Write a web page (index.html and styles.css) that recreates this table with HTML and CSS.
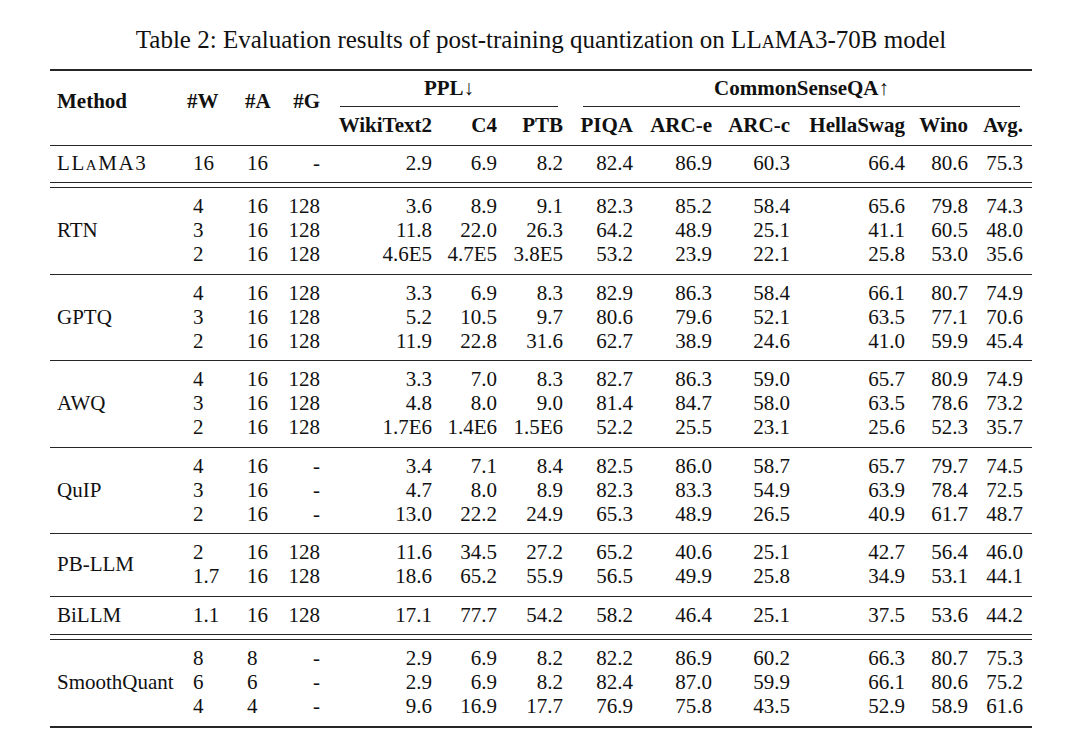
FILE: index.html
```html
<!DOCTYPE html>
<html>
<head>
<meta charset="utf-8">
<link rel="stylesheet" href="styles.css">
</head>
<body>
<div class="page">
  <div class="caption">Table 2: Evaluation results of post-training quantization on LL<span class="sc">a</span>MA3-70B model</div>
  <div class="tbl">
    <div class="g hd">
      <div class="h hm">Method</div>
      <div class="h hl hw">#W</div>
      <div class="h hl ha">#A</div>
      <div class="h hr hg">#G</div>
      <div class="h grp-ppl">PPL<span class="arr">↓</span></div>
      <div class="h grp-cs">CommonSenseQA<span class="arr">↑</span></div>
      <div class="cmid cmid-ppl"></div>
      <div class="cmid cmid-cs"></div>
      <div class="h sub c5">WikiText2</div>
      <div class="h sub c6">C4</div>
      <div class="h sub c7">PTB</div>
      <div class="h sub c8">PIQA</div>
      <div class="h sub c9">ARC-e</div>
      <div class="h sub c10">ARC-c</div>
      <div class="h sub c11">HellaSwag</div>
      <div class="h sub c12">Wino</div>
      <div class="h sub c13">Avg.</div>
    </div>

    <div class="g first">
      <span class="m llama">LL<span class="sc">a</span>MA3</span><span class="l">16</span><span class="l">16</span><span>-</span><span>2.9</span><span>6.9</span><span>8.2</span><span>82.4</span><span>86.9</span><span>60.3</span><span>66.4</span><span>80.6</span><span>75.3</span>
    </div>

    <div class="dbl"></div>

    <div class="g nb">
      <span class="m s3">RTN</span>
      <span class="l">4</span><span class="l">16</span><span>128</span><span>3.6</span><span>8.9</span><span>9.1</span><span>82.3</span><span>85.2</span><span>58.4</span><span>65.6</span><span>79.8</span><span>74.3</span>
      <span class="l">3</span><span class="l">16</span><span>128</span><span>11.8</span><span>22.0</span><span>26.3</span><span>64.2</span><span>48.9</span><span>25.1</span><span>41.1</span><span>60.5</span><span>48.0</span>
      <span class="l">2</span><span class="l">16</span><span>128</span><span>4.6E5</span><span>4.7E5</span><span>3.8E5</span><span>53.2</span><span>23.9</span><span>22.1</span><span>25.8</span><span>53.0</span><span>35.6</span>
    </div>

    <div class="g">
      <span class="m s3">GPTQ</span>
      <span class="l">4</span><span class="l">16</span><span>128</span><span>3.3</span><span>6.9</span><span>8.3</span><span>82.9</span><span>86.3</span><span>58.4</span><span>66.1</span><span>80.7</span><span>74.9</span>
      <span class="l">3</span><span class="l">16</span><span>128</span><span>5.2</span><span>10.5</span><span>9.7</span><span>80.6</span><span>79.6</span><span>52.1</span><span>63.5</span><span>77.1</span><span>70.6</span>
      <span class="l">2</span><span class="l">16</span><span>128</span><span>11.9</span><span>22.8</span><span>31.6</span><span>62.7</span><span>38.9</span><span>24.6</span><span>41.0</span><span>59.9</span><span>45.4</span>
    </div>

    <div class="g">
      <span class="m s3">AWQ</span>
      <span class="l">4</span><span class="l">16</span><span>128</span><span>3.3</span><span>7.0</span><span>8.3</span><span>82.7</span><span>86.3</span><span>59.0</span><span>65.7</span><span>80.9</span><span>74.9</span>
      <span class="l">3</span><span class="l">16</span><span>128</span><span>4.8</span><span>8.0</span><span>9.0</span><span>81.4</span><span>84.7</span><span>58.0</span><span>63.5</span><span>78.6</span><span>73.2</span>
      <span class="l">2</span><span class="l">16</span><span>128</span><span>1.7E6</span><span>1.4E6</span><span>1.5E6</span><span>52.2</span><span>25.5</span><span>23.1</span><span>25.6</span><span>52.3</span><span>35.7</span>
    </div>

    <div class="g">
      <span class="m s3">QuIP</span>
      <span class="l">4</span><span class="l">16</span><span>-</span><span>3.4</span><span>7.1</span><span>8.4</span><span>82.5</span><span>86.0</span><span>58.7</span><span>65.7</span><span>79.7</span><span>74.5</span>
      <span class="l">3</span><span class="l">16</span><span>-</span><span>4.7</span><span>8.0</span><span>8.9</span><span>82.3</span><span>83.3</span><span>54.9</span><span>63.9</span><span>78.4</span><span>72.5</span>
      <span class="l">2</span><span class="l">16</span><span>-</span><span>13.0</span><span>22.2</span><span>24.9</span><span>65.3</span><span>48.9</span><span>26.5</span><span>40.9</span><span>61.7</span><span>48.7</span>
    </div>

    <div class="g">
      <span class="m s2">PB-LLM</span>
      <span class="l">2</span><span class="l">16</span><span>128</span><span>11.6</span><span>34.5</span><span>27.2</span><span>65.2</span><span>40.6</span><span>25.1</span><span>42.7</span><span>56.4</span><span>46.0</span>
      <span class="l">1.7</span><span class="l">16</span><span>128</span><span>18.6</span><span>65.2</span><span>55.9</span><span>56.5</span><span>49.9</span><span>25.8</span><span>34.9</span><span>53.1</span><span>44.1</span>
    </div>

    <div class="g single">
      <span class="m">BiLLM</span><span class="l">1.1</span><span class="l">16</span><span>128</span><span>17.1</span><span>77.7</span><span>54.2</span><span>58.2</span><span>46.4</span><span>25.1</span><span>37.5</span><span>53.6</span><span>44.2</span>
    </div>

    <div class="dbl"></div>

    <div class="g nb">
      <span class="m s3">SmoothQuant</span>
      <span class="l">8</span><span class="l">8</span><span>-</span><span>2.9</span><span>6.9</span><span>8.2</span><span>82.2</span><span>86.9</span><span>60.2</span><span>66.3</span><span>80.7</span><span>75.3</span>
      <span class="l">6</span><span class="l">6</span><span>-</span><span>2.9</span><span>6.9</span><span>8.2</span><span>82.4</span><span>87.0</span><span>59.9</span><span>66.1</span><span>80.6</span><span>75.2</span>
      <span class="l">4</span><span class="l">4</span><span>-</span><span>9.6</span><span>16.9</span><span>17.7</span><span>76.9</span><span>75.8</span><span>43.5</span><span>52.9</span><span>58.9</span><span>61.6</span>
    </div>
  </div>
</div>
</body>
</html>
```

FILE: styles.css
```css
html, body {
  margin: 0;
  padding: 0;
  background: #ffffff;
}

body {
  color: #111111;
  font-family: "Liberation Serif", "Times New Roman", serif;
}

.page {
  width: 1080px;
  height: 754px;
  padding: 26px 0 0 50px;
  box-sizing: border-box;
}

.caption {
  width: 982px;
  text-align: center;
  font-size: 25px;
  line-height: 28px;
  white-space: nowrap;
}

.sc {
  font-variant: small-caps;
}

.tbl {
  width: 982px;
  margin-top: 15px;
  border-top: 2px solid #262626;
  border-bottom: 2px solid #262626;
  font-size: 21px;
  line-height: 24px;
}

.g {
  display: grid;
  grid-template-columns: 136px 54px 45px 35px 112px 65px 66px 70px 79px 78px 115px 63px 55px;
  grid-auto-rows: 24px;
  padding: 6px 9px 7.5px 0;
  border-top: 1px solid #262626;
  text-align: right;
  white-space: nowrap;
}

.g.nb {
  border-top: none;
}

.g.first {
  padding-top: 5px;
  padding-bottom: 7px;
}

.g .l {
  text-align: left;
  padding-left: 7px;
}

.g .m {
  grid-column: 1;
  text-align: left;
  padding-left: 7px;
  align-self: center;
}

.g .llama {
  letter-spacing: 1.6px;
}

.g .s3 {
  grid-row: 1 / span 3;
}

.g .s2 {
  grid-row: 1 / span 2;
}

.dbl {
  height: 4px;
  border-top: 1px solid #262626;
  border-bottom: 1px solid #262626;
}

/* header */
.g.hd {
  border-top: none;
  grid-template-rows: 24px 13px 24px;
  padding: 5px 9px 8px 0;
  font-weight: bold;
}

.hd .h {
  font-weight: bold;
}

.hd .hm,
.hd .hw,
.hd .ha,
.hd .hg {
  grid-row: 1 / span 3;
  align-self: start;
  margin-top: 13px;
}

.hd .hm {
  grid-column: 1;
  text-align: left;
  padding-left: 7px;
}

.hd .hw {
  grid-column: 2;
  text-align: left;
  padding-left: 1px;
}

.hd .ha {
  grid-column: 3;
  text-align: left;
  padding-left: 5px;
}

.hd .hg {
  grid-column: 4;
  text-align: right;
}

.hd .grp-ppl {
  grid-column: 5 / 8;
  grid-row: 1;
  text-align: center;
  margin: 0 5px 0 20px;
}

.hd .grp-cs {
  grid-column: 8 / 14;
  grid-row: 1;
  text-align: center;
  margin: 0 3px 0 20px;
}

.arr {
  font-weight: normal;
}

.cmid {
  grid-row: 2;
  margin-top: 6px;
  height: 0;
  border-top: 1px solid #262626;
}

.cmid-ppl {
  grid-column: 5 / 8;
  margin-left: 20px;
  margin-right: 5px;
}

.cmid-cs {
  grid-column: 8 / 14;
  margin-left: 20px;
  margin-right: 3px;
}

.hd .sub {
  grid-row: 3;
  text-align: right;
}

.hd .c5 { grid-column: 5; }
.hd .c6 { grid-column: 6; }
.hd .c7 { grid-column: 7; }
.hd .c8 { grid-column: 8; }
.hd .c9 { grid-column: 9; }
.hd .c10 { grid-column: 10; }
.hd .c11 { grid-column: 11; }
.hd .c12 { grid-column: 12; }
.hd .c13 { grid-column: 13; }
```
